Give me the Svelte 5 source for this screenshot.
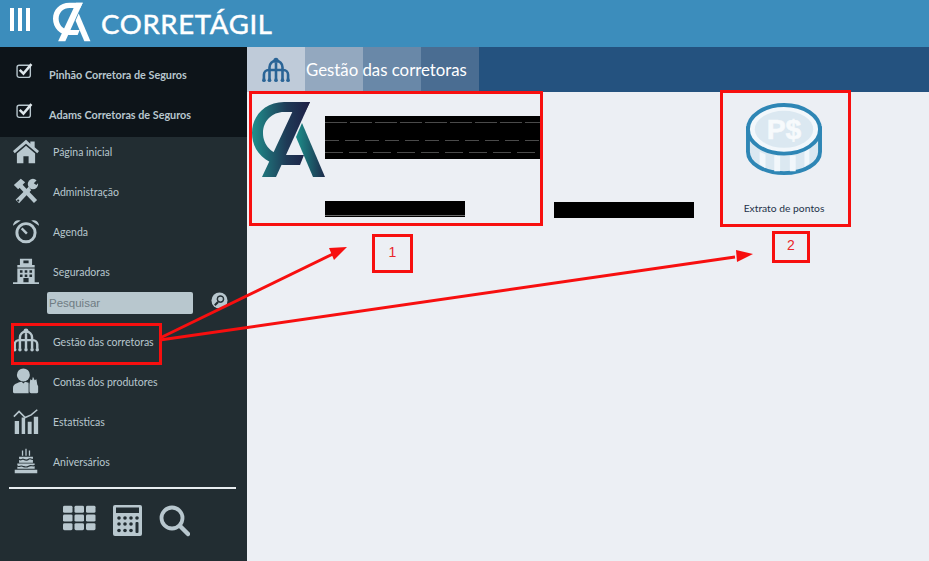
<script>
	const companies = ['Pinhão Corretora de Seguros', 'Adams Corretoras de Seguros'];
	const menu = [
		{ label: 'Página inicial', icon: 'home' },
		{ label: 'Administração', icon: 'tools' },
		{ label: 'Agenda', icon: 'clock' },
		{ label: 'Seguradoras', icon: 'building' },
		{ label: 'Gestão das corretoras', icon: 'fountain' },
		{ label: 'Contas dos produtores', icon: 'person' },
		{ label: 'Estatísticas', icon: 'chart' },
		{ label: 'Aniversários', icon: 'cake' }
	];
</script>

{#snippet fountain(color)}
	<g fill="none" stroke={color} stroke-width="2.8">
		<path d="M2 24v-5a5 5 0 0 1 5-5h16a5 5 0 0 1 5 5v5" />
		<path d="M8 24V11a7 7 0 0 1 14 0v13" />
		<path d="M15 6v18" />
	</g>
	<g fill={color}>
		<circle cx="15" cy="3.5" r="2.8" />
		<circle cx="2" cy="25" r="2" />
		<circle cx="8" cy="25" r="2" />
		<circle cx="15" cy="25" r="2" />
		<circle cx="22" cy="25" r="2" />
		<circle cx="28" cy="25" r="2" />
	</g>
{/snippet}

{#snippet logo(a, b)}
	<path
		fill={a}
		d="M58 0H32C13 0 0 14 0 31c0 18 14 32 32 32h16l4-10H33C20 53 11 43 11 31c0-12 9-21 21-21h21z"
	/>
	<path fill={a} d="M45 0h13L24 75H10z" />
	<path fill={b} d="M50 21l23 54H61L44 35z" />
{/snippet}

<div class="page">
	<header class="topbar">
		<div class="burger"><span></span><span></span><span></span></div>
		<svg class="brand-mark" viewBox="0 0 74 75" aria-hidden="true">
			{@render logo('#fff', '#fff')}
		</svg>
		<span class="brand">CORRETÁGIL</span>
	</header>

	<div class="body">
		<aside class="sidebar">
			<div class="companies">
				{#each companies as name}
					<div class="company">
						<svg viewBox="0 0 16 16" width="17" height="17" aria-hidden="true">
							<rect x="1" y="3" width="12.5" height="11.5" rx="2" fill="none" stroke="#b8c7ce" stroke-width="1.3" />
							<path d="M3.5 7.5l3.5 3.500 7.500-9" fill="none" stroke="#dfe8ec" stroke-width="2.400" />
						</svg>
						<span>{name}</span>
					</div>
				{/each}
			</div>

			<nav class="menu">
				{#each menu as item}
					{#if item.icon === 'fountain'}
						<div class="search">
							<div class="search-input">Pesquisar</div>
							<svg viewBox="0 0 18 18" width="17" height="17" aria-hidden="true">
								<circle cx="9" cy="9" r="8.500" fill="#b8c7ce" />
								<circle cx="10" cy="7.500" r="3.600" fill="#222d32" stroke="#222d32" />
								<circle cx="10" cy="7.500" r="2.600" fill="#b8c7ce" />
								<path d="M7.500 10.500L4 14" stroke="#222d32" stroke-width="2.200" />
							</svg>
						</div>
					{/if}
					<div class="item">
						<svg class="item-icon" viewBox="0 0 30 30" aria-hidden="true">
							{#if item.icon === 'home'}
								<path fill="#b8c7ce" d="M15 2L0 15l2 2.500L15 6.500 28 17.500l2-2.500-5-4.300V4h-5v2.500z" />
								<path fill="#b8c7ce" d="M4.500 18L15 9l10.500 9v11H18v-8h-6v8H4.500z" />
							{:else if item.icon === 'tools'}
								<path fill="none" stroke="#b8c7ce" stroke-width="5" d="M6 6l20 21" />
								<path fill="#b8c7ce" d="M1 8l8-7 5 4-8 8zM3 25L18 10l3 4L7 29z" />
								<circle cx="23" cy="7" r="6" fill="#b8c7ce" />
								<path d="M24 6l5-5 1 4-3 3z" fill="#222d32" />
								<circle cx="6" cy="26" r="1.300" fill="#222d32" />
							{:else if item.icon === 'clock'}
								<circle cx="15" cy="17" r="10.500" fill="none" stroke="#b8c7ce" stroke-width="3.400" />
								<path d="M0 9a6.500 6.500 0 0 1 9-6zM30 9a6.500 6.500 0 0 0-9-6z" fill="#b8c7ce" />
								<path d="M10 12l6 6" stroke="#b8c7ce" stroke-width="2.800" />
							{:else if item.icon === 'building'}
								<path fill="#b8c7ce" fill-rule="evenodd" d="M8 1h14v7h3v3H5V8h3zM12 3v3h6V3zM5 12h20v16H5zM8 14v3h3v-3zm5.500 0v3h3v-3zm5.500 0v3h3v-3zM8 19v3h3v-3zm5.500 0v3h3v-3zm5.500 0v3h3v-3zM12 23v5h6v-5zM0 28h30v2H0z" />
							{:else if item.icon === 'fountain'}
								{@render fountain('#b8c7ce')}
							{:else if item.icon === 'person'}
								<circle cx="12" cy="8" r="7.500" fill="#b8c7ce" />
								<path fill="#b8c7ce" d="M0 28v-5c0-4 5-6 10-7l2 2 2-2 4 1v12H2a2 2 0 0 1-2-1z" />
								<path fill="#b8c7ce" d="M19 27v-8l1-6 2 1 1-4 2 4 2-1 1 6 1 2v7a2 2 0 0 1-2 1h-6a2 2 0 0 1-2-2z" />
							{:else if item.icon === 'chart'}
								<path fill="none" stroke="#b8c7ce" stroke-width="1.800" d="M1 10l6-6 7 7 7-3 7-6" />
								<path fill="#b8c7ce" d="M2 15h5v15H2zM10 11h4v19h-4zM17 16h4.500v14H17zM24 10h5v20h-5z" />
							{:else}
								<path fill="#b8c7ce" d="M7 10h16v7H7zM5 18h20v6H5zM2 25h26v4H2z" />
								<path stroke="#b8c7ce" stroke-width="1.500" d="M11 3v6M15 1v8M19 3v6" />
								<path fill="none" stroke="#222d32" stroke-width="1.300" d="M4 20c3 3 4 0 7 1s4 2 7 0 5 1 8-1M7 13c3 2 3-1 5 0s4 2 6 0 3 1 5 0" />
							{/if}
						</svg>
						<span>{item.label}</span>
					</div>
				{/each}
			</nav>

			<hr />

			<div class="tools">
				<svg class="grid-icon" viewBox="0 0 33 30" width="33" height="26" preserveAspectRatio="none" aria-hidden="true">
					<g fill="#b8c7ce">
						<rect x="0" y="1" width="9.500" height="8" rx="1.500" />
						<rect x="11.500" y="1" width="9.500" height="8" rx="1.500" />
						<rect x="23" y="1" width="9.500" height="8" rx="1.500" />
						<rect x="0" y="11" width="9.500" height="8" rx="1.500" />
						<rect x="11.500" y="11" width="9.500" height="8" rx="1.500" />
						<rect x="23" y="11" width="9.500" height="8" rx="1.500" />
						<rect x="0" y="21" width="9.500" height="8" rx="1.500" />
						<rect x="11.500" y="21" width="9.500" height="8" rx="1.500" />
						<rect x="23" y="21" width="9.500" height="8" rx="1.500" />
					</g>
				</svg>
				<svg viewBox="0 0 31 33" width="31" height="33" aria-hidden="true">
					<rect x="1" y="1" width="29" height="31" rx="2" fill="#b8c7ce" />
					<rect x="4" y="3.500" width="23" height="5.500" fill="#222d32" />
					<g fill="#222d32">
						<circle cx="7" cy="14" r="1.800" /><circle cx="13" cy="14" r="1.800" /><circle cx="19" cy="14" r="1.800" /><circle cx="25" cy="14" r="1.800" />
						<circle cx="7" cy="20" r="1.800" /><circle cx="13" cy="20" r="1.800" /><circle cx="19" cy="20" r="1.800" />
						<circle cx="7" cy="26.500" r="1.800" /><circle cx="13" cy="26.500" r="1.800" /><circle cx="19" cy="26.500" r="1.800" />
						<rect x="23.500" y="18" width="3" height="11" rx="1" />
					</g>
				</svg>
				<svg viewBox="0 0 31 32" width="31" height="32" aria-hidden="true">
					<circle cx="13" cy="13" r="10.500" fill="none" stroke="#b8c7ce" stroke-width="3.800" />
					<path d="M21 21l8 8" stroke="#b8c7ce" stroke-width="4.500" stroke-linecap="round" />
				</svg>
			</div>
		</aside>

		<main class="main">
			<div class="title-bar">
				<div class="tabs">
					<div class="tab tab1">
						<svg viewBox="0 0 30 28" width="28" height="26" aria-hidden="true">
							{@render fountain('#2a6496')}
						</svg>
					</div>
					<div class="tab tab2"></div>
					<div class="tab tab3"></div>
					<div class="tab tab4"></div>
				</div>
				<h1>Gestão das corretoras</h1>
			</div>

			<div class="cards">
				<div class="card company-card">
					<svg class="card-logo" viewBox="0 0 74 75" aria-hidden="true">
						<defs>
							<linearGradient id="logo-a" gradientUnits="userSpaceOnUse" x1="0" x2="58" y1="0" y2="0">
								<stop offset="0" stop-color="#1f8f8c" />
								<stop offset="0.6" stop-color="#1f3a56" />
								<stop offset="1" stop-color="#1e1f45" />
							</linearGradient>
							<linearGradient id="logo-b" gradientUnits="userSpaceOnUse" x1="44" x2="73" y1="0" y2="0">
								<stop offset="0" stop-color="#1c8f8a" />
								<stop offset="1" stop-color="#1d2a4a" />
							</linearGradient>
						</defs>
						{@render logo('url(#logo-a)', 'url(#logo-b)')}
					</svg>
					<div class="redact name-redact"></div>
					<div class="redact sub-redact"></div>
				</div>

				<div class="redact middle-redact"></div>

				<div class="card coin-card">
					<svg viewBox="0 0 78 76" width="76" height="74" aria-hidden="true">
						<path d="M2 26v24c0 12 16 22 37 22s37-10 37-22V26z" fill="#dbe8f1" stroke="#2e86b5" stroke-width="4" />
						<g fill="#f2f7fb">
							<path d="M14 50l6 3v14l-6-4zM29 54h6v16h-6zM45 54h6v16h-6zM60 50l5-3v15l-5 4z" />
						</g>
						<ellipse cx="39" cy="27" rx="37" ry="25" fill="#f2f7fb" stroke="#2e86b5" stroke-width="4" />
						<ellipse cx="39" cy="27" rx="30" ry="19" fill="#dbe8f1" />
						<text x="39" y="37" text-anchor="middle" class="coin-text">P$</text>
					</svg>
					<span class="coin-label">Extrato de pontos</span>
				</div>
			</div>
		</main>
	</div>

	<!-- screenshot annotations -->
	<div class="mark box-menu"></div>
	<div class="mark box-company"></div>
	<div class="mark box-coin"></div>
	<div class="mark num num1">1</div>
	<div class="mark num num2">2</div>
	<svg class="arrows" viewBox="0 0 929 561" aria-hidden="true">
		<path d="M160 338L335 253" stroke="#f70f0f" stroke-width="3" />
		<path d="M347 247l-18 1 5 12z" fill="#f70f0f" />
		<path d="M160 340L735 257" stroke="#f70f0f" stroke-width="3" />
		<path d="M753 254l-17-4 1 12z" fill="#f70f0f" />
	</svg>
</div>

<style>
	:global(body) {
		margin: 0;
		background: #eceff4;
	}

	.page {
		position: relative;
		width: 929px;
		height: 561px;
		overflow: hidden;
		font-family: Lato, 'Noto Sans', sans-serif;
	}

	.topbar {
		height: 47px;
		display: flex;
		align-items: center;
		background: #3c8dbc;
		color: #fff;
	}

	.burger {
		display: flex;
		gap: 4px;
		margin-left: 10px;
		margin-bottom: 8px;
	}

	.burger span {
		width: 4px;
		height: 23px;
		background: #fff;
	}

	.brand-mark {
		width: 38px;
		height: 40px;
		margin-left: 23px;
		margin-bottom: 3px;
	}

	.brand {
		margin-left: 10px;
		font-size: 27.5px;
		letter-spacing: 0.7px;
		-webkit-text-stroke: 0.5px #fff;
	}

	.body {
		display: flex;
		height: 514px;
	}

	.sidebar {
		width: 247px;
		flex-shrink: 0;
		background: #222d32;
	}

	.companies {
		height: 90px;
		background: #0d1419;
		padding-top: 7px;
		box-sizing: border-box;
	}

	.company {
		height: 40px;
		display: flex;
		align-items: center;
		padding-left: 16px;
		color: #b8c7ce;
		font-size: 10.8px;
		font-weight: 700;
	}

	.company svg {
		margin-right: 16px;
		margin-top: -8px;
	}

	.menu {
		margin-top: -5px;
	}

	.item {
		height: 40px;
		display: flex;
		align-items: center;
		padding-left: 13px;
		color: #b8c7ce;
		font-size: 10.5px;
	}

	.item-icon {
		width: 26px;
		height: 26px;
		margin-right: 14px;
		margin-top: -2px;
	}

	.search {
		height: 30px;
		display: flex;
		align-items: flex-start;
		gap: 18px;
		padding-left: 47px;
	}

	.search-input {
		width: 146px;
		height: 22px;
		box-sizing: border-box;
		padding-left: 2px;
		line-height: 22px;
		background: #b8c7ce;
		border-radius: 2px;
		color: #6f7c83;
		font-family: 'Liberation Sans', sans-serif;
		font-size: 11.5px;
	}

	hr {
		margin: 5px 11px 0 9px;
		border: none;
		border-top: 2px solid #e8edf0;
	}

	.tools {
		display: flex;
		justify-content: center;
		align-items: center;
		gap: 16px;
		margin-top: 15px;
		padding-left: 7px;
	}

	.grid-icon {
		margin-bottom: 5px;
		margin-left: -1px;
	}

	.main {
		flex: 1;
		background: #eceff4;
	}

	.title-bar {
		position: relative;
		height: 45px;
		display: flex;
		align-items: center;
		background: #24527f;
	}

	.tabs {
		display: flex;
		height: 100%;
	}

	.tab {
		width: 58px;
		display: flex;
		align-items: center;
		justify-content: center;
	}

	.tab1 {
		background: #bfcbd9;
	}

	.tab2 {
		background: #93a8bf;
	}

	.tab3 {
		background: #6988a8;
	}

	.tab4 {
		background: #4a6d92;
	}

	h1 {
		position: absolute;
		left: 59px;
		margin: 0;
		color: #fff;
		font-size: 16.8px;
		font-weight: 400;
	}

	.cards {
		display: flex;
		align-items: flex-start;
	}

	.card {
		position: relative;
		flex-shrink: 0;
	}

	.company-card {
		width: 307px;
		height: 134px;
	}

	.card-logo {
		position: absolute;
		left: 5px;
		top: 10px;
		width: 74px;
		height: 75px;
	}

	.redact {
		background: #000;
	}

	.name-redact {
		position: absolute;
		left: 78px;
		top: 24px;
		width: 216px;
		height: 43px;
		background:
			repeating-linear-gradient(90deg, #4a4a4a 0 22px, #000 22px 25px) 0 6px / 100% 1px no-repeat,
			repeating-linear-gradient(90deg, #4a4a4a 0 14px, #000 14px 20px) 0 24px / 100% 1px no-repeat,
			repeating-linear-gradient(90deg, #4a4a4a 0 18px, #000 18px 24px) 0 36px / 100% 1px no-repeat,
			#000;
	}

	.sub-redact {
		position: absolute;
		left: 78px;
		top: 109px;
		width: 140px;
		height: 16px;
		background: linear-gradient(#6a6a6a, #6a6a6a) 0 14px / 100% 1px no-repeat, #000;
	}

	.middle-redact {
		width: 140px;
		height: 16px;
		margin-top: 110px;
		flex-shrink: 0;
	}

	.coin-card {
		width: 128px;
		margin-left: 26px;
		display: flex;
		flex-direction: column;
		align-items: center;
		padding-top: 11px;
	}

	.coin-text {
		fill: #f7fafc;
		font-family: 'Liberation Sans', sans-serif;
		font-size: 29px;
		font-weight: 700;
		stroke: #f7fafc;
		stroke-width: 0.6px;
	}

	.coin-label {
		margin-top: 25px;
		color: #24324a;
		font-size: 10.3px;
	}

	.mark {
		position: absolute;
		box-sizing: border-box;
		border: 3px solid #f70f0f;
	}

	.box-menu {
		left: 11px;
		top: 323px;
		width: 151px;
		height: 42px;
	}

	.box-company {
		left: 249px;
		top: 91px;
		width: 294px;
		height: 135px;
	}

	.box-coin {
		left: 720px;
		top: 90px;
		width: 131px;
		height: 137px;
	}

	.num {
		color: #e9262a;
		font-family: 'Liberation Sans', sans-serif;
		font-size: 14px;
		text-align: center;
	}

	.num1 {
		left: 372px;
		top: 234px;
		width: 41px;
		height: 39px;
		padding-top: 7px;
	}

	.num2 {
		left: 772px;
		top: 231px;
		width: 38px;
		height: 32px;
		padding-top: 3px;
	}

	.arrows {
		position: absolute;
		inset: 0;
		width: 929px;
		height: 561px;
		pointer-events: none;
	}
</style>
